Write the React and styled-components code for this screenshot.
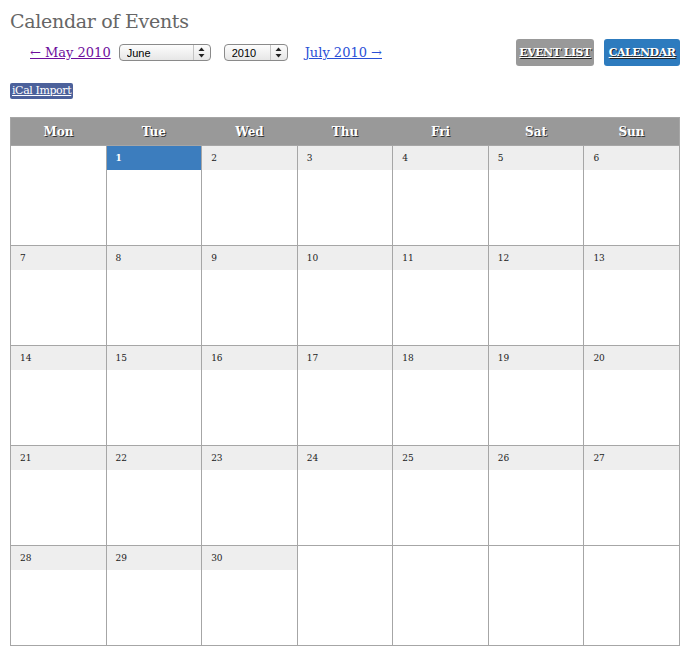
import React from "react";
import styled, { createGlobalStyle } from "styled-components";

const GlobalStyle = createGlobalStyle`
  body {
    margin: 0;
    background: #fff;
    font-family: "DejaVu Serif", Georgia, serif;
  }
`;

const days = ["Mon", "Tue", "Wed", "Thu", "Fri", "Sat", "Sun"];

// June 2010 starts on a Tuesday
const buildWeeks = () => {
  const cells = [null];
  for (let d = 1; d <= 30; d++) cells.push(d);
  while (cells.length % 7) cells.push(null);
  const weeks = [];
  for (let i = 0; i < cells.length; i += 7) weeks.push(cells.slice(i, i + 7));
  return weeks;
};

const Arrows = () => (
  <svg width="7" height="11" viewBox="0 0 7 11">
    <path d="M3.5 0.5 L6.5 4 L0.5 4 Z" fill="#222" />
    <path d="M3.5 10.5 L6.5 7 L0.5 7 Z" fill="#222" />
  </svg>
);

const App = () => {
  const weeks = buildWeeks();

  return (
    <Page>
      <GlobalStyle />
      <Title>Calendar of Events</Title>
      <NavRow>
        <NavLeft>
          <MonthLink href="#" visited>← May 2010</MonthLink>
          <SelectBox width={92}>
            <Select defaultValue="June">
              <option>June</option>
            </Select>
            <ArrowBox><Arrows /></ArrowBox>
          </SelectBox>
          <SelectBox width={64}>
            <Select defaultValue="2010">
              <option>2010</option>
            </Select>
            <ArrowBox><Arrows /></ArrowBox>
          </SelectBox>
          <MonthLink href="#">July 2010 →</MonthLink>
        </NavLeft>
        <ViewButtons>
          <ViewButton href="#" width={78}>Event List</ViewButton>
          <ViewButton href="#" width={76} active>Calendar</ViewButton>
        </ViewButtons>
      </NavRow>
      <ImportLink href="#">iCal Import</ImportLink>
      <Grid>
        <thead>
          <tr>
            {days.map((d) => (
              <HeadCell key={d}>{d}</HeadCell>
            ))}
          </tr>
        </thead>
        <tbody>
          {weeks.map((week, wi) => (
            <tr key={wi}>
              {week.map((day, di) => (
                <DayCell key={di}>
                  {day && <DayNumber today={day === 1}>{day}</DayNumber>}
                </DayCell>
              ))}
            </tr>
          ))}
        </tbody>
      </Grid>
    </Page>
  );
};

const Page = styled.div`
  width: 670px;
  padding: 8px 10px 10px;
`;

const Title = styled.h1`
  margin: 0;
  font-family: "DejaVu Serif", Georgia, serif;
  font-weight: normal;
  font-size: 19px;
  letter-spacing: -0.3px;
  color: #666;
  line-height: 26px;
`;

const NavRow = styled.div`
  display: flex;
  justify-content: space-between;
  align-items: center;
  margin-top: 5px;
  height: 27px;
`;

const NavLeft = styled.div`
  display: flex;
  align-items: center;
  padding-left: 20px;
`;

const MonthLink = styled.a`
  font-family: "DejaVu Serif", Georgia, serif;
  font-size: 13px;
  color: ${(p) => (p.visited ? "#6e0d9c" : "#2a4fd6")};
  text-decoration: underline;
  margin-right: 8px;
  margin-left: ${(p) => (p.visited ? "0" : "4px")};
`;

const SelectBox = styled.div`
  display: flex;
  align-items: stretch;
  width: ${(p) => p.width}px;
  height: 17px;
  box-sizing: border-box;
  border: 1px solid #8a8a8a;
  border-radius: 4px;
  background: linear-gradient(#fdfdfd, #e6e6e6);
  margin-right: 13px;
  overflow: hidden;
`;

const Select = styled.select`
  appearance: none;
  flex: 1;
  min-width: 0;
  border: none;
  background: transparent;
  font-family: "Liberation Sans", Arial, sans-serif;
  font-size: 11px;
  color: #000;
  padding: 0 0 0 7px;
  outline: none;
`;

const ArrowBox = styled.span`
  display: flex;
  align-items: center;
  justify-content: center;
  width: 16px;
  border-left: 1px solid #c4c4c4;
`;

const ViewButtons = styled.div`
  display: flex;
  gap: 10px;
`;

const ViewButton = styled.a`
  display: flex;
  align-items: center;
  justify-content: center;
  box-sizing: border-box;
  width: ${(p) => p.width}px;
  height: 27px;
  padding: 0;
  border-radius: 3px;
  background: ${(p) => (p.active ? "#2d7bbe" : "#999")};
  color: #fff;
  font-family: "DejaVu Serif", Georgia, serif;
  font-weight: bold;
  font-size: 11px;
  letter-spacing: -0.5px;
  text-transform: uppercase;
  text-decoration: underline;
  text-shadow: 1px 1px 0 #222;
`;

const ImportLink = styled.a`
  display: inline-block;
  margin-top: 17px;
  padding: 1px 2px;
  border-radius: 2px;
  background: #4c619b;
  color: #fff;
  font-family: "DejaVu Serif", Georgia, serif;
  font-size: 11px;
  letter-spacing: -0.4px;
  line-height: 14px;
  text-decoration: underline;
`;

const Grid = styled.table`
  margin-top: 18px;
  width: 670px;
  border-collapse: collapse;
  table-layout: fixed;
  border: 1px solid #a6a6a6;
`;

const HeadCell = styled.th`
  height: 27px;
  padding: 0;
  background: #999;
  color: #fff;
  font-family: "DejaVu Serif", Georgia, serif;
  font-size: 12px;
  font-weight: bold;
  text-shadow: 1px 1px 0 #333;
  border: none;
`;

const DayCell = styled.td`
  height: 99px;
  padding: 0;
  vertical-align: top;
  border: 1px solid #a6a6a6;
`;

const DayNumber = styled.div`
  height: 24px;
  box-sizing: border-box;
  padding: 7px 0 0 9px;
  background: ${(p) => (p.today ? "#3c7dbe" : "#eee")};
  color: ${(p) => (p.today ? "#fff" : "#222")};
  font-family: "DejaVu Serif", Georgia, serif;
  font-size: 9px;
  font-weight: ${(p) => (p.today ? "bold" : "normal")};
`;

export default App;
